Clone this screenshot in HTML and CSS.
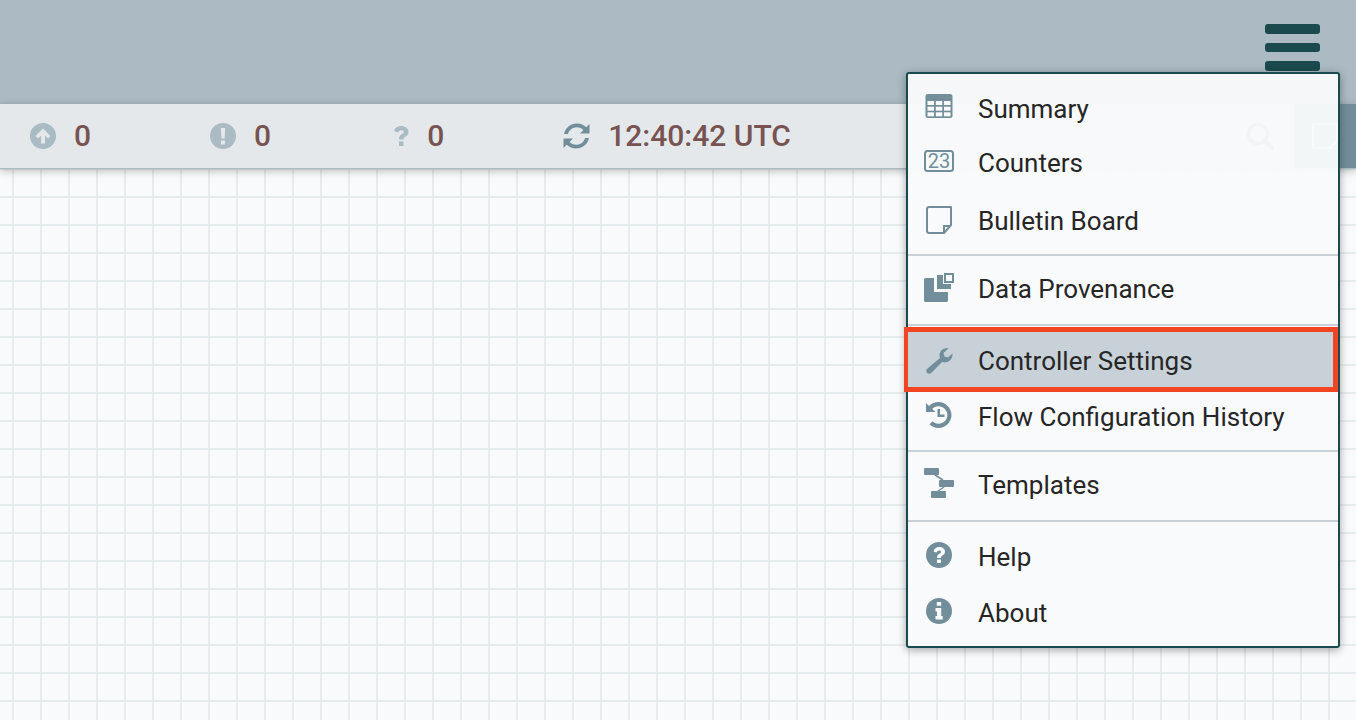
FILE: index.html
```html
<!DOCTYPE html>
<html lang="en">
<head>
    <meta charset="UTF-8">
    <title>NiFi Flow</title>
    <link rel="stylesheet" href="styles.css">
</head>
<body>
    <header class="top-bar">
        <div class="burger">
            <span></span>
            <span></span>
            <span></span>
        </div>
    </header>

    <div class="status-bar">
        <div class="status-item">
            <svg class="status-icon" viewBox="0 0 26 26"><circle cx="13" cy="13" r="13" fill="#aabbc3"/><path d="M13 5.5 L20.5 13 L18 15.5 L15 12.5 V20.5 H11 V12.5 L8 15.5 L5.5 13 Z" fill="#e4e8eb"/></svg>
            <span class="status-value">0</span>
        </div>
        <div class="status-item item-wide">
            <svg class="status-icon" viewBox="0 0 26 26"><circle cx="13" cy="13" r="13" fill="#aabbc3"/><path d="M10.8 5 H15.2 L14.6 15.5 H11.4 Z M11 17.5 H15 V21.5 H11 Z" fill="#e4e8eb"/></svg>
            <span class="status-value">0</span>
        </div>
        <div class="status-item">
            <svg class="status-icon icon-narrow" viewBox="0 0 16 22"><path d="M1 6 C2 2.5 4.8 1 8 1 C12 1 15.5 3.2 15.5 7 C15.5 10 13.5 11 11.8 12 C10.8 12.6 10.5 13 10.5 14.5 H6 C6 11.5 6.5 10.5 8.5 9.3 C10 8.4 10.8 8 10.8 7 C10.8 5.8 9.6 5.2 8.2 5.2 C6.8 5.2 5.8 6 4.8 7.5 Z M6 16.5 H10.5 V21 H6 Z" fill="#aabbc3"/></svg>
            <span class="status-value">0</span>
        </div>
        <div class="status-item">
            <svg class="status-icon refresh-icon" viewBox="0 0 27 26"><path d="M26.5 1 V10.5 H17 L20.5 7 C19 5.6 16.5 4.2 13.8 4.2 C9.5 4.2 6 7 5 11 H1 C2.2 5 7.5 0.5 13.8 0.5 C17.5 0.5 21 2.2 23.3 4.3 Z M0.5 25 V15.5 H10 L6.5 19 C8 20.6 10.5 21.8 13.2 21.8 C17.5 21.8 21 19 22 15 H26 C24.8 21 19.5 25.5 13.2 25.5 C9.5 25.5 6 23.8 3.7 21.7 Z" fill="#728e9b"/></svg>
            <span class="status-value status-time">12:40:42 UTC</span>
        </div>
        <div class="search-btn">
            <svg class="search-icon" viewBox="0 0 28 28"><circle cx="12" cy="12" r="9.5" fill="none" stroke="#5a7a89" stroke-width="4"/><path d="M19 19 L26 26" stroke="#5a7a89" stroke-width="5" stroke-linecap="round"/></svg>
        </div>
        <div class="bulletin-btn">
            <svg class="note-icon" viewBox="0 0 26 26"><path d="M1 1 H25 V18 L18 25 H1 Z" fill="none" stroke="#fff" stroke-width="2"/></svg>
        </div>
    </div>

    <main class="canvas"></main>

    <nav class="menu">
        <section class="menu-group group-first">
            <a class="menu-row row-short icon-high">
                <svg class="menu-icon" viewBox="0 0 30 30"><rect x="1.5" y="3" width="27" height="24" rx="2.5" fill="#728e9b"/><g fill="#f9fafb"><rect x="3.5" y="10" width="6.5" height="4"/><rect x="11.8" y="10" width="6.5" height="4"/><rect x="20" y="10" width="6.5" height="4"/><rect x="3.5" y="15.7" width="6.5" height="4"/><rect x="11.8" y="15.7" width="6.5" height="4"/><rect x="20" y="15.7" width="6.5" height="4"/><rect x="3.5" y="21.3" width="6.5" height="4"/><rect x="11.8" y="21.3" width="6.5" height="4"/><rect x="20" y="21.3" width="6.5" height="4"/></g></svg>
                <span>Summary</span>
            </a>
            <a class="menu-row row-short">
                <svg class="menu-icon" viewBox="0 0 30 30"><rect x="1" y="5" width="28" height="20" rx="2.5" fill="none" stroke="#728e9b" stroke-width="2"/><text x="15" y="22" text-anchor="middle" class="counter-text">23</text></svg>
                <span>Counters</span>
            </a>
            <a class="menu-row row-tall icon-low">
                <svg class="menu-icon" viewBox="0 0 30 30"><path d="M5 2 H27 V20 L20 28 H5 Q3 28 3 26 V4 Q3 2 5 2 Z" fill="none" stroke="#728e9b" stroke-width="2" stroke-linejoin="round"/><path d="M20 27 V21 H26.5" fill="none" stroke="#728e9b" stroke-width="2"/></svg>
                <span>Bulletin Board</span>
            </a>
        </section>
        <section class="menu-group group-single">
            <a class="menu-row icon-low">
                <svg class="menu-icon" viewBox="0 0 30 30"><path d="M0 6.5 Q0 5 1.5 5 H10 V19 H24 V27.5 Q24 29 22.5 29 H1.5 Q0 29 0 27.5 Z M13 2 H19 V11 H27 V16 H13 Z" fill="#728e9b"/><rect x="21" y="1" width="8" height="8" fill="#f9fafb" stroke="#728e9b" stroke-width="2"/></svg>
                <span>Data Provenance</span>
            </a>
        </section>
        <section class="menu-group group-settings">
            <a class="menu-row row-active icon-low">
                <svg class="menu-icon" viewBox="0 0 30 30"><path d="M24.5 3.5 C20 2 15.5 5.5 15.5 10 C15.5 11 15.7 12 16 13 L3.5 23.5 C2 25 2 26.8 3.2 28 C4.4 29.2 6.2 29 7.5 27.7 L18 17 C23.5 19 29 14.5 28.5 8.5 L24 12.5 L20.5 11.5 L19.5 8 Z" fill="#728e9b"/></svg>
                <span>Controller Settings</span>
                <i class="highlight"></i>
            </a>
            <a class="menu-row row-history">
                <svg class="menu-icon" viewBox="0 0 30 30"><path d="M2 3 L5 6 C7.5 3.5 10.8 2 14.5 2 C21.5 2 27.5 8 27.5 15 C27.5 22 21.5 28 14.5 28 C11 28 7.8 26.6 5.5 24.3 L8.5 21.3 C10 22.8 12 23.8 14.5 23.8 C19.3 23.8 23.3 19.8 23.3 15 C23.3 10.2 19.3 6.2 14.5 6.2 C12 6.2 9.8 7.2 8.2 9 L11.5 12 H2 Z" fill="#728e9b"/><path d="M13.5 9 H16 V14.5 H20.5 V17 H13.5 Z" fill="#728e9b"/></svg>
                <span>Flow Configuration History</span>
            </a>
        </section>
        <section class="menu-group group-single">
            <a class="menu-row">
                <svg class="menu-icon" viewBox="0 0 30 30"><rect x="0" y="0" width="15" height="7" rx="1" fill="#728e9b"/><rect x="15" y="12" width="15" height="7" rx="1" fill="#728e9b"/><rect x="7" y="23" width="15" height="7" rx="1" fill="#728e9b"/><path d="M11 7 L19 12 M20 19 L14 23" stroke="#728e9b" stroke-width="1.5"/></svg>
                <span>Templates</span>
            </a>
        </section>
        <section class="menu-group group-last">
            <a class="menu-row">
                <svg class="menu-icon" viewBox="0 0 30 30"><circle cx="15" cy="15" r="13" fill="#728e9b"/><path d="M9.5 11.5 C10 8.5 12.5 7 15.2 7 C18.5 7 21 9 21 11.8 C21 14 19.5 15 18.2 15.8 C17.2 16.4 17 16.8 17 18 H13 C13 15.8 13.8 14.7 15.2 13.8 C16.5 13 17 12.7 17 11.9 C17 11 16 10.5 15 10.5 C14 10.5 13.2 11.2 12.5 12.5 Z M13 19.5 H17 V23 H13 Z" fill="#f9fafb"/></svg>
                <span>Help</span>
            </a>
            <a class="menu-row">
                <svg class="menu-icon" viewBox="0 0 30 30"><circle cx="15" cy="15" r="13" fill="#728e9b"/><path d="M12.8 6 H17.2 V9.8 H12.8 Z M11.5 12 H17.2 V20 H18.7 V23.5 H11.5 V20 H13 V15.5 H11.5 Z" fill="#f9fafb"/></svg>
                <span>About</span>
            </a>
        </section>
    </nav>
</body>
</html>
```

FILE: styles.css
```css
html, body {
    height: 100%;
}
body {
    margin: 0;
    font-family: Roboto, "Liberation Sans", sans-serif;
    background-color: #f9fafb;
    display: flex;
    flex-direction: column;
    overflow: hidden;
}
.top-bar {
    height: 104px;
    flex: none;
    background-color: #abbac3;
    display: flex;
    justify-content: flex-end;
    padding: 24px 36px 0 0;
    box-sizing: border-box;
}
.burger {
    width: 55px;
    display: flex;
    flex-direction: column;
    gap: 9px;
}
.burger span {
    height: 9.5px;
    border-radius: 3px;
    background-color: #1a4a4d;
}

/* status bar under the header */
.status-bar {
    height: 65px;
    flex: none;
    box-sizing: border-box;
    background-color: #e4e8eb;
    border-bottom: 1px solid #aabbc3;
    box-shadow: 0 2px 8px rgba(0, 0, 0, 0.25);
    padding-left: 30px;
    display: flex;
    align-items: center;
    position: relative;
    z-index: 1;
}
.status-item {
    display: flex;
    align-items: center;
    gap: 18px;
    margin-right: 119px;
}
.item-wide {
    margin-right: 122px;
}
.status-icon {
    width: 26px;
    height: 26px;
    display: block;
}
.icon-narrow {
    width: 16px;
    height: 22px;
}
.refresh-icon {
    width: 27px;
}
.status-value {
    font-size: 30px;
    font-weight: 500;
    line-height: 32px;
    color: #775351;
}
.search-btn {
    position: absolute;
    left: 1228px;
    top: 0;
    width: 64px;
    height: 64px;
    background-color: #e4e8eb;
    display: flex;
    align-items: center;
    justify-content: center;
}
.search-icon {
    width: 28px;
    height: 28px;
}
.bulletin-btn {
    position: absolute;
    left: 1294px;
    top: 0;
    width: 62px;
    height: 64px;
    background-color: #728e9b;
    display: flex;
    align-items: center;
    justify-content: center;
}
.note-icon {
    width: 26px;
    height: 26px;
}

/* the flow canvas */
.canvas {
    flex: 1;
    background-color: #f9fafb;
    background-image:
        linear-gradient(to right, #e6ebed 2px, transparent 2px),
        linear-gradient(to bottom, #e6ebed 2px, transparent 2px);
    background-size: 28px 28px;
    background-position: 12px 27px;
}

/* dropdown menu */
.menu {
    position: absolute;
    left: 906px;
    top: 72px;
    width: 434px;
    height: 576px;
    box-sizing: border-box;
    border: 2px solid #1a4a4d;
    border-radius: 3px;
    background-color: rgba(249, 250, 251, 0.96);
    box-shadow: 0 2px 8px rgba(0, 0, 0, 0.35);
    z-index: 2;
}
.menu-group {
    border-bottom: 2px solid #c8d1d7;
}
.group-first {
    padding: 8px 0 2px;
}
.group-single {
    padding: 5px 0 7px;
}
.group-settings {
    padding: 6px 0 3px;
}
.group-last {
    padding: 7px 0 0;
    border-bottom: none;
}
.menu-row {
    height: 56px;
    box-sizing: border-box;
    display: flex;
    align-items: center;
    padding-left: 16px;
    gap: 24px;
    font-size: 26px;
    color: #262626;
    position: relative;
}
.row-short {
    height: 54px;
}
.row-tall {
    height: 62px;
}
.row-history {
    height: 60px;
}
.menu-icon {
    width: 30px;
    height: 30px;
    flex: none;
    margin-bottom: 4px;
}
.icon-high .menu-icon {
    margin-bottom: 6px;
}
.icon-low .menu-icon {
    margin-bottom: 2px;
}
.counter-text {
    font-family: Roboto, sans-serif;
    font-size: 20px;
    fill: #728e9b;
}
.row-active {
    height: 55px;
    padding-top: 3px;
    background-color: #c8d1d7;
}
.highlight {
    position: absolute;
    left: -4px;
    right: 0;
    top: -5px;
    bottom: -5px;
    border: solid #f24523;
    border-width: 5px 5px 5px 4px;
}
```
